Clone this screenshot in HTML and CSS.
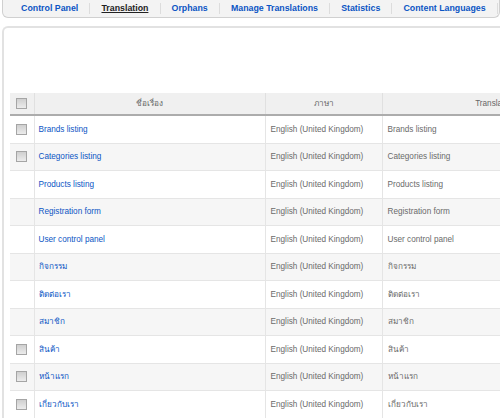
FILE: index.html
```html
<!DOCTYPE html>
<html lang="th">
<head>
    <meta charset="UTF-8">
    <title>Translation</title>
    <link rel="stylesheet" href="styles.css">
</head>
<body>
    <div class="submenu">
        <a href="#">Control Panel</a>
        <a href="#" class="active">Translation</a>
        <a href="#">Orphans</a>
        <a href="#">Manage Translations</a>
        <a href="#">Statistics</a>
        <a href="#">Content Languages</a>
    </div>

    <div class="content">
        <table class="adminlist">
            <colgroup>
                <col class="col-check">
                <col class="col-title">
                <col class="col-lang">
                <col class="col-trans">
            </colgroup>
            <thead>
                <tr>
                    <th class="check"><input type="checkbox"></th>
                    <th>ชื่อเรื่อง</th>
                    <th>ภาษา</th>
                    <th>Translation</th>
                </tr>
            </thead>
            <tbody>
                <tr>
                    <td class="check"><input type="checkbox"></td>
                    <td><a href="#">Brands listing</a></td>
                    <td>English (United Kingdom)</td>
                    <td>Brands listing</td>
                </tr>
                <tr class="alt">
                    <td class="check"><input type="checkbox"></td>
                    <td><a href="#">Categories listing</a></td>
                    <td>English (United Kingdom)</td>
                    <td>Categories listing</td>
                </tr>
                <tr>
                    <td class="check"></td>
                    <td><a href="#">Products listing</a></td>
                    <td>English (United Kingdom)</td>
                    <td>Products listing</td>
                </tr>
                <tr class="alt">
                    <td class="check"></td>
                    <td><a href="#">Registration form</a></td>
                    <td>English (United Kingdom)</td>
                    <td>Registration form</td>
                </tr>
                <tr>
                    <td class="check"></td>
                    <td><a href="#">User control panel</a></td>
                    <td>English (United Kingdom)</td>
                    <td>User control panel</td>
                </tr>
                <tr class="alt">
                    <td class="check"></td>
                    <td><a href="#">กิจกรรม</a></td>
                    <td>English (United Kingdom)</td>
                    <td>กิจกรรม</td>
                </tr>
                <tr>
                    <td class="check"></td>
                    <td><a href="#">ติดต่อเรา</a></td>
                    <td>English (United Kingdom)</td>
                    <td>ติดต่อเรา</td>
                </tr>
                <tr class="alt">
                    <td class="check"></td>
                    <td><a href="#">สมาชิก</a></td>
                    <td>English (United Kingdom)</td>
                    <td>สมาชิก</td>
                </tr>
                <tr>
                    <td class="check"><input type="checkbox"></td>
                    <td><a href="#">สินค้า</a></td>
                    <td>English (United Kingdom)</td>
                    <td>สินค้า</td>
                </tr>
                <tr class="alt">
                    <td class="check"><input type="checkbox"></td>
                    <td><a href="#">หน้าแรก</a></td>
                    <td>English (United Kingdom)</td>
                    <td>หน้าแรก</td>
                </tr>
                <tr>
                    <td class="check"><input type="checkbox"></td>
                    <td><a href="#">เกี่ยวกับเรา</a></td>
                    <td>English (United Kingdom)</td>
                    <td>เกี่ยวกับเรา</td>
                </tr>
            </tbody>
        </table>
    </div>
</body>
</html>
```

FILE: styles.css
```css
html, body {
    overflow: hidden;
}

body {
    margin: 0;
    font-family: "Liberation Sans", Arial, "Noto Sans", sans-serif;
    color: #555;
    background-color: #fff;
}

a {
    color: #0b55c4;
    text-decoration: none;
}

/* Sub menu */
.submenu {
    display: flex;
    align-items: center;
    height: 17px;
    margin: 0 0 0 2px;
    padding-left: 7px;
    background-color: #f3f3f3;
    border: 1px solid #d0d0d0;
    border-top: none;
    border-radius: 0 0 6px 6px;
    white-space: nowrap;
}

.submenu a {
    padding: 0 11.1px;
    font-size: 8.8px;
    font-weight: bold;
    line-height: 11px;
    border-right: 1px solid #dcdcdc;
}

.submenu a.active {
    color: #222;
    text-decoration: underline;
}

/* Content box */
.content {
    margin: 8px 0 0 2px;
    padding: 65px 0 0 6px;
    border: 2px solid #e2e2e2;
    border-right: none;
    border-bottom: none;
    border-radius: 6px 0 0 0;
    width: 700px;
}

.adminlist {
    border-collapse: collapse;
    table-layout: fixed;
    width: 598px;
    font-size: 8.2px;
}

.col-check {
    width: 24px;
}

.col-title {
    width: 231px;
}

.col-lang {
    width: 117px;
}

.col-trans {
    width: 226px;
}

.adminlist th {
    height: 21px;
    padding: 0;
    background-color: #f0f0f0;
    color: #666;
    font-weight: normal;
    text-align: center;
    border-left: 1px solid #e0e0e0;
    border-bottom: 2px solid #acacac;
}

.adminlist td {
    height: 26.5px;
    padding: 0 5px;
    color: #6a6a6a;
    border-left: 1px solid #e5e5e5;
    border-bottom: 1px solid #e5e5e5;
    white-space: nowrap;
    overflow: hidden;
}

.adminlist td:nth-child(2) {
    padding-left: 4px;
}

.adminlist tr.alt td {
    background-color: #f6f6f6;
}

.adminlist .check {
    padding: 0;
    text-align: center;
    border-left: none;
}

.adminlist input[type="checkbox"] {
    appearance: none;
    display: block;
    width: 11px;
    height: 11px;
    margin: 0 auto;
    border: 1px solid #a5a5a5;
    background: linear-gradient(#cfcfcf, #ececec);
    box-sizing: border-box;
}
```
